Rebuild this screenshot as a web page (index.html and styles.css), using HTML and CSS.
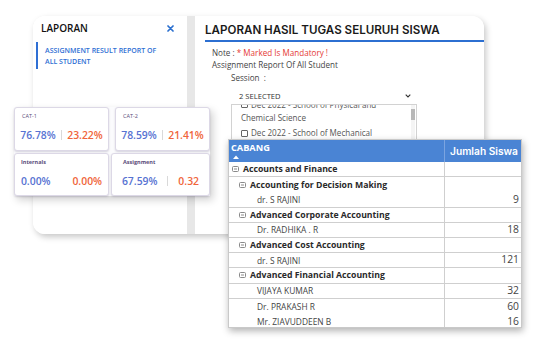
FILE: index.html
```html
<!DOCTYPE html>
<html>
<head>
<meta charset="utf-8">
<link rel="stylesheet" href="styles.css">
</head>
<body>
<div class="desk">
  <div class="window">
    <aside class="side">
      <div class="side-head">
        <span>LAPORAN</span>
        <svg class="close" width="7" height="7" viewBox="0 0 7 7"><path d="M1 1L6 6M6 1L1 6" stroke="#2a6fcf" stroke-width="1.7" stroke-linecap="round"/></svg>
      </div>
      <div class="side-item">ASSIGNMENT RESULT REPORT OF ALL STUDENT</div>
    </aside>
    <div class="gutter"></div>
    <main class="main">
      <h1 class="title">LAPORAN HASIL TUGAS SELURUH SISWA</h1>
      <div class="form">
        <p class="line">Note : <span class="req">* Marked Is Mandatory !</span></p>
        <p class="line">Assignment Report Of All Student</p>
        <p class="line session">Session &nbsp;:</p>
        <div class="select">
          <span>2 SELECTED</span>
          <svg width="6" height="4" viewBox="0 0 6 4"><path d="M0.7 0.7L3 3L5.3 0.7" fill="none" stroke="#333" stroke-width="1.1"/></svg>
        </div>
        <div class="list">
          <div class="items">
            <div class="item"><span class="box"></span>Dec 2022 - School of Physical and Chemical Science</div>
            <div class="item"><span class="box"></span>Dec 2022 - School of Mechanical</div>
          </div>
          <div class="scroll"><div class="thumb"></div></div>
        </div>
      </div>
    </main>
  </div>

  <div class="stats">
    <div class="stat-row">
      <div class="card c-a">
        <div class="label">CAT-1</div>
        <div class="vals"><span class="pos">76.78%</span><span class="sep"></span><span class="neg">23.22%</span></div>
      </div>
      <div class="card c-b">
        <div class="label">CAT-2</div>
        <div class="vals"><span class="pos">78.59%</span><span class="sep"></span><span class="neg">21.41%</span></div>
      </div>
    </div>
    <div class="stat-row row2">
      <div class="card c-a">
        <div class="label bold">Internals</div>
        <div class="vals"><span class="pos">0.00%</span><span class="sep blank"></span><span class="neg">0.00%</span></div>
      </div>
      <div class="card c-c">
        <div class="label bold">Assignment</div>
        <div class="vals"><span class="pos">67.59%</span><span class="sep"></span><span class="neg">0.32</span></div>
      </div>
    </div>
  </div>

  <div class="table">
    <div class="thead">
      <div class="h1c"><span>CABANG</span><svg width="6" height="4" viewBox="0 0 6 4"><path d="M0 4L3 0.5L6 4Z" fill="#fff"/></svg></div>
      <div class="h2c">Jumlah Siswa</div>
    </div>
    <div class="tr b l0"><div class="td"><svg class="tog" width="7" height="6" viewBox="0 0 7 6"><rect x="0.5" y="0.5" width="6" height="5" rx="1" fill="#fff" stroke="#8a8a8a"/><path d="M2 3H5" stroke="#8a8a8a"/></svg>Accounts and Finance</div><div class="tn"></div></div>
    <div class="tr l1"><div class="td"><svg class="tog" width="7" height="6" viewBox="0 0 7 6"><rect x="0.5" y="0.5" width="6" height="5" rx="1" fill="#fff" stroke="#8a8a8a"/><path d="M2 3H5" stroke="#8a8a8a"/></svg>Accounting for Decision Making</div><div class="tn"></div></div>
    <div class="tr b l2"><div class="td">dr. S RAJINI</div><div class="tn">9</div></div>
    <div class="tr b l1"><div class="td"><svg class="tog" width="7" height="6" viewBox="0 0 7 6"><rect x="0.5" y="0.5" width="6" height="5" rx="1" fill="#fff" stroke="#8a8a8a"/><path d="M2 3H5" stroke="#8a8a8a"/></svg>Advanced Corporate Accounting</div><div class="tn"></div></div>
    <div class="tr b l2"><div class="td">Dr. RADHIKA . R</div><div class="tn">18</div></div>
    <div class="tr b l1"><div class="td"><svg class="tog" width="7" height="6" viewBox="0 0 7 6"><rect x="0.5" y="0.5" width="6" height="5" rx="1" fill="#fff" stroke="#8a8a8a"/><path d="M2 3H5" stroke="#8a8a8a"/></svg>Advanced Cost Accounting</div><div class="tn"></div></div>
    <div class="tr b l2"><div class="td">dr. S RAJINI</div><div class="tn">121</div></div>
    <div class="tr b l1"><div class="td"><svg class="tog" width="7" height="6" viewBox="0 0 7 6"><rect x="0.5" y="0.5" width="6" height="5" rx="1" fill="#fff" stroke="#8a8a8a"/><path d="M2 3H5" stroke="#8a8a8a"/></svg>Advanced Financial Accounting</div><div class="tn"></div></div>
    <div class="tr b l2"><div class="td">VIJAYA KUMAR</div><div class="tn">32</div></div>
    <div class="tr l2"><div class="td">Dr. PRAKASH R</div><div class="tn">60</div></div>
    <div class="tr l2"><div class="td">Mr. ZIAVUDDEEN B</div><div class="tn">16</div></div>
  </div>
</div>
</body>
</html>
```

FILE: styles.css
```css
* { box-sizing: border-box; }
html, body { margin: 0; padding: 0; background: #fff; }
body { width: 539px; height: 344px; overflow: hidden; font-family: "Open Sans", "Noto Sans", sans-serif; color: #333; }
p { margin: 0; }

.desk { position: relative; width: 539px; height: 344px; }

/* main window */
.window {
  position: absolute; left: 33px; top: 16px; width: 451px; height: 218px;
  display: flex; background: #fff; border-radius: 12px; overflow: hidden;
  box-shadow: 2px 3px 6px rgba(0,0,0,0.22);
}
.side { width: 154px; background: #fff; }
.side-head { display: flex; justify-content: space-between; align-items: center; padding: 4px 13px 0 8px; height: 20px; font-size: 10px; font-weight: 600; color: #111; }
.close { margin-top: 1px; }
.side-item { margin: 6px 0 0 3px; padding: 3px 18px 2px 7px; border-left: 2px solid #2f6fd4; font-size: 7px; font-weight: 600; line-height: 11px; color: #2f6fd4; }
.gutter { width: 8px; background: #e7e7e7; }
.main { flex: 1; background: #fff; }
.title { margin: 0 0 0 10px; padding-top: 5px; height: 26px; border-bottom: 2px solid #2c6fd1; font-family: Inter, sans-serif; font-weight: 600; font-size: 11.6px; line-height: 19px; color: #1a1a1a; }
.form { padding: 5px 0 0 17px; font-size: 8.1px; color: #444; }
.line { line-height: 12.3px; }
.req { color: #e53935; }
.session { padding-left: 19px; }
.select { margin: 6px 0 0 19px; width: 185px; height: 12px; display: flex; justify-content: space-between; align-items: center; padding: 0 5px 0 8px; font-size: 7.6px; color: #333; }
.list { position: relative; margin: 2px 0 0 19px; width: 186px; height: 60px; border: 1px solid #d2d2d2; overflow: hidden; background: #fff; }
.items { margin-top: -7px; padding-left: 9px; padding-right: 12px; font-size: 8.1px; color: #555; }
.item { line-height: 13.3px; padding-bottom: 2px; }
.box { display: inline-block; width: 7px; height: 7px; border: 1px solid #666; border-radius: 1px; margin-right: 3px; vertical-align: -0.5px; }
.scroll { position: absolute; right: 1px; top: 0; width: 4px; height: 100%; background: #f4f4f4; }
.thumb { margin-top: 4px; width: 4px; height: 11px; background: #b8b8b8; }

/* stats */
.stats { position: absolute; left: 14px; top: 107px; width: 196px; display: flex; flex-direction: column; gap: 2px; box-shadow: 3px 4px 8px rgba(0,0,0,0.18); background: #fbfbfd; }
.stat-row { display: flex; gap: 6px; height: 44px; }
.stat-row.row2 { gap: 2px; height: 43px; }
.card { background: #fff; border: 1px solid #dcd8e6; border-radius: 3px; box-shadow: 0 1px 2px rgba(60,50,90,0.2); padding-top: 5px; }
.c-a { width: 95px; }
.c-b { width: 95px; }
.c-c { width: 99px; }
.label { font-size: 5.5px; line-height: 7px; color: #5b4d7a; padding-left: 7px; }
.label.bold { font-weight: 700; padding-left: 6px; }
.c-c .label { padding-left: 11px; }
.vals { display: flex; align-items: center; justify-content: space-evenly; margin-top: 8px; font-size: 10.4px; font-weight: 600; line-height: 14px; }
.pos { color: #5772d2; }
.neg { color: #f0653a; }
.sep { width: 1px; height: 10px; background: #d9d9d9; }
.sep.blank { background: transparent; width: 10px; }

/* table */
.table { position: absolute; left: 228px; top: 139px; width: 294px; height: 189px; background: #fff; border: 1px solid #c9c9c9; box-shadow: 1px 3px 7px rgba(0,0,0,0.3); overflow: hidden; }
.thead { display: flex; height: 22px; background: #4a84d4; color: #fff; }
.h1c { width: 216px; border-right: 1px solid #7ba4e0; padding: 2px 0 0 2px; display: flex; flex-direction: column; font-size: 9.2px; font-weight: 700; line-height: 11px; }
.h1c svg { margin: 2px 0 0 2px; }
.h2c { flex: 1; display: flex; align-items: center; justify-content: center; padding-left: 2px; font-family: Inter, sans-serif; font-weight: 600; font-size: 10.2px; }
.tr { display: flex; height: 15.2px; }
.tr.b { border-bottom: 1px solid #cfcfcf; }
.td { width: 216px; border-right: 1px solid #cfcfcf; display: flex; align-items: center; font-size: 8.7px; white-space: nowrap; }
.tn { flex: 1; text-align: right; padding-right: 2px; font-size: 10.3px; line-height: 15px; color: #444; display: flex; align-items: flex-end; justify-content: flex-end; }
.tog { margin-right: 4px; flex: none; }
.l0 .td { padding-left: 3px; font-weight: 700; color: #2a2a2a; }
.l1 .td { padding-left: 10px; font-weight: 700; color: #2a2a2a; }
.l2 .td { padding-left: 28px; font-size: 8.4px; color: #444; }
```
